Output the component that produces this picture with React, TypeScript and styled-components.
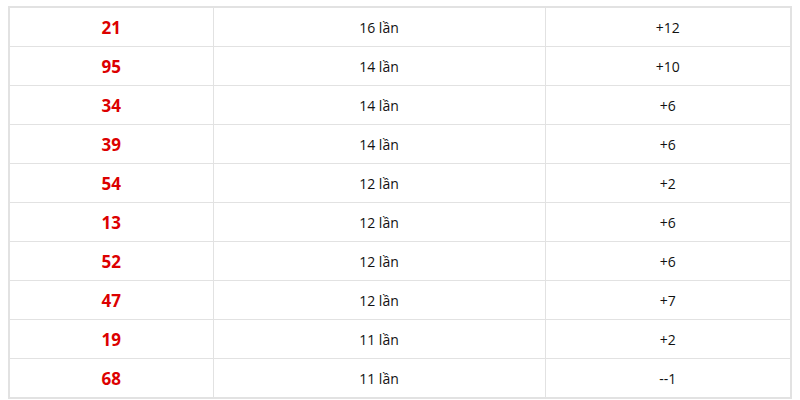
import React from "react";
import styled, { createGlobalStyle } from "styled-components";

const GlobalStyle = createGlobalStyle`
  body {
    margin: 6px 8px 0;
    background: #fff;
    font-family: "Open Sans", "Liberation Sans", sans-serif;
  }
`;

const Table = styled.table`
  width: 100%;
  border-collapse: collapse;
  border: 2px solid #e2e2e2;
  table-layout: fixed;
`;

const Cell = styled.td`
  height: 38px;
  padding: 0;
  border: 1px solid #e2e2e2;
  text-align: center;
  vertical-align: middle;
  font-size: 14px;
  color: #111;
`;

const NumCell = styled(Cell)`
  font-size: 17px;
  font-weight: 700;
  color: #dc0000;
`;

const rows: [string, number, string][] = [
  ["21", 16, "+12"],
  ["95", 14, "+10"],
  ["34", 14, "+6"],
  ["39", 14, "+6"],
  ["54", 12, "+2"],
  ["13", 12, "+6"],
  ["52", 12, "+6"],
  ["47", 12, "+7"],
  ["19", 11, "+2"],
  ["68", 11, "--1"],
];

export default function App() {
  return (
    <>
      <GlobalStyle />
      <Table>
        <colgroup>
          <col style={{ width: 204 }} />
          <col style={{ width: 332 }} />
          <col />
        </colgroup>
        <tbody>
          {rows.map(([num, count, diff]) => (
            <tr key={num}>
              <NumCell>{num}</NumCell>
              <Cell>{count} lần</Cell>
              <Cell>{diff}</Cell>
            </tr>
          ))}
        </tbody>
      </Table>
    </>
  );
}
